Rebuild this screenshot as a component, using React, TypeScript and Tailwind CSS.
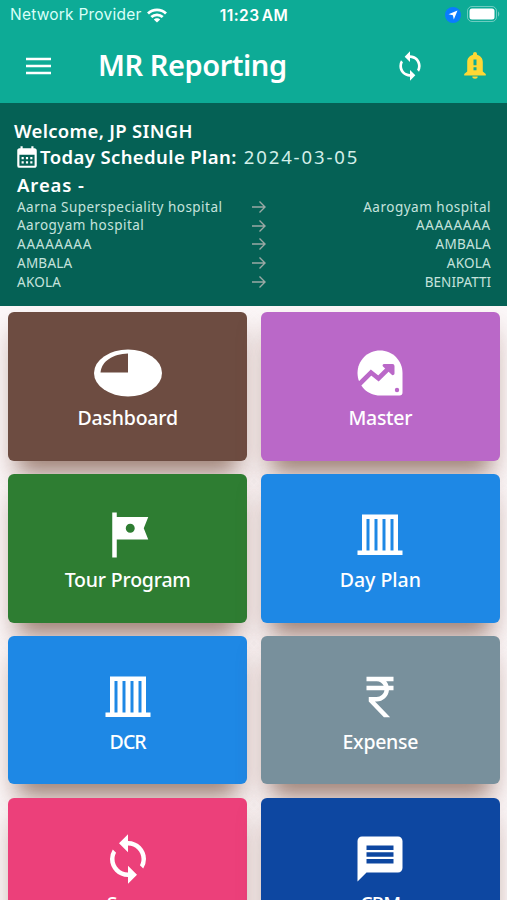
import React from 'react';
import { MdCalendarMonth, MdCurrencyRupee, MdMessage, MdSync, MdTour } from 'react-icons/md';

interface MenuItem {
  label: string;
  color: string;
  spacing: string;
  icon: React.ReactNode;
}

const areas = [
  { from: 'Aarna Superspeciality hospital', to: 'Aarogyam hospital', fromSpacing: 'tracking-[0.47px]', toSpacing: 'tracking-[0.5px]' },
  { from: 'Aarogyam hospital', to: 'AAAAAAAA', fromSpacing: 'tracking-[0.47px]', toSpacing: 'tracking-[0.75px]' },
  { from: 'AAAAAAAA', to: 'AMBALA', fromSpacing: 'tracking-[0.75px]', toSpacing: 'tracking-[0.25px]' },
  { from: 'AMBALA', to: 'AKOLA', fromSpacing: 'tracking-[0.25px]', toSpacing: 'tracking-[0.25px]' },
  { from: 'AKOLA', to: 'BENIPATTI', fromSpacing: 'tracking-[0.25px]', toSpacing: 'tracking-[0px]' },
];

const PieIcon = () => (
  <svg width="70" height="54" viewBox="0 0 70 54">
    <ellipse cx="35" cy="27" rx="34" ry="23.5" fill="white" />
    <path d="M35 26.5V7.5C20 8 8.500 15 7.500 26.500Z" fill="#6d4c41" />
  </svg>
);

const TrendIcon = () => (
  <svg width="54" height="54" viewBox="0 0 54 54" fill="none">
    <path d="M27 4.500C39.500 4.500 49.500 14.500 49.500 27V46.500a3 3 0 0 1-3 3H27C14.500 49.500 4.500 39.500 4.500 27S14.500 4.500 27 4.500Z" fill="white" />
    <path d="M5.500 39 18 26.500 25.500 32.500 36 22" stroke="#ba68c8" strokeWidth="4.600" />
    <path d="M31.500 18H39.500a2 2 0 0 1 2 2V27.500a1.700 1.700 0 0 1-3 1L30 20.500a1.500 1.500 0 0 1 1.500-2.500Z" fill="#ba68c8" />
    <circle cx="44" cy="44" r="2.200" fill="#ba68c8" />
  </svg>
);

const BuildingIcon = () => (
  <svg width="54" height="54" viewBox="0 0 54 54">
    <path
      fill="white"
      fillRule="evenodd"
      d="M9 6.500H45V42.500H49.500V47H4.500V42.500H9ZM13.500 11V42.500H16.500V11ZM21.500 11V42.500H24.500V11ZM29.500 11V42.500H32.500V11ZM37.500 11V42.500H40.500V11Z"
    />
  </svg>
);

const BellIcon = () => (
  <svg className="mr-[5px] ml-[38px]" width="22" height="27" viewBox="0 0 22 27" fill="#fdd835">
    <path
      fillRule="evenodd"
      d="M11 0a2 2 0 0 1 2 2V2.800C16.500 3.700 18.800 6.500 18.800 10V19.500L21.800 22V23.400H.2V22L3.200 19.500V10C3.200 6.500 5.500 3.700 9 2.800V2A2 2 0 0 1 11 0ZM9.500 7.500V13.200H12.500V7.500ZM9.500 15.300V18.300H12.500V15.300Z"
    />
    <path d="M8.300 24.500H13.700A2.700 2.200 0 0 1 8.300 24.500Z" />
  </svg>
);

const menu: MenuItem[] = [
  { label: 'Dashboard', color: 'bg-[#6d4c41]', spacing: 'tracking-[-0.2px]', icon: <PieIcon /> },
  { label: 'Master', color: 'bg-[#ba68c8]', spacing: 'tracking-[-0.3px]', icon: <TrendIcon /> },
  { label: 'Tour Program', color: 'bg-[#2e7d32]', spacing: 'tracking-[-0.2px]', icon: <MdTour size={54} /> },
  { label: 'Day Plan', color: 'bg-[#1e88e5]', spacing: 'tracking-[0px]', icon: <BuildingIcon /> },
  { label: 'DCR', color: 'bg-[#1e88e5]', spacing: 'tracking-[-0.9px]', icon: <BuildingIcon /> },
  { label: 'Expense', color: 'bg-[#78909c]', spacing: 'tracking-[-0.3px]', icon: <MdCurrencyRupee size={54} /> },
  { label: 'Sync', color: 'bg-[#ec407a]', spacing: 'tracking-[-0.2px]', icon: <MdSync size={54} /> },
  { label: 'CRM', color: 'bg-[#0d47a1]', spacing: 'tracking-[-0.9px]', icon: <MdMessage size={54} /> },
];

const StatusBar = () => (
  <div className="grid h-[30px] grid-cols-3 items-center px-[10px] font-['Inter',sans-serif]">
    <div className="flex items-center gap-[6px]">
      <span className="text-[15.5px] tracking-[0.22px] whitespace-nowrap text-[#d9fff8]">Network Provider</span>
      <svg className="shrink-0" width="20" height="15" viewBox="0 0 20 15" fill="none" stroke="white" strokeWidth="2.800">
        <path d="M1 5.500C6 .7 14 .7 19 5.500M4.300 9.100C7.500 6.100 12.500 6.100 15.700 9.100" />
        <path d="M10 14.500 6.800 11.500C8.500 9.800 11.500 9.800 13.200 11.500Z" fill="white" stroke="none" />
      </svg>
    </div>
    <div className="pt-[1px] pl-[1px] text-center text-[15.5px] font-semibold tracking-[0.45px] [word-spacing:-2px]">11:23 AM</div>
    <div className="flex items-center justify-end gap-[6px]">
      <svg width="16" height="16" viewBox="0 0 16 16">
        <circle cx="8" cy="8" r="8" fill="#0a7cff" />
        <path d="M12.500 3.500 8.800 12.500 7.900 8.200 3.500 7.300Z" fill="white" />
      </svg>
      <svg className="-mr-[3px] mb-[2px]" width="33" height="16" viewBox="0 0 33 16">
        <rect x=".5" y=".5" width="29" height="15" rx="4.500" fill="none" stroke="white" strokeOpacity=".4" />
        <rect x="2.500" y="2.500" width="25" height="11" rx="2.500" fill="white" />
        <path d="M31 5.500c1.700.6 1.700 4.400 0 5Z" fill="white" fillOpacity=".4" />
      </svg>
    </div>
  </div>
);

const MenuCard: React.FC<{ item: MenuItem }> = ({ item }) => (
  <button
    className={`relative flex h-[148.5px] flex-col items-center rounded-[6px] pt-[34px] shadow-[0_24px_20px_-14px_rgba(125,92,76,0.62),0_14px_26px_-2px_rgba(150,100,90,0.36)] ${item.color}`}
  >
    {item.icon}
    <span className={`mt-[4px] text-[19.5px] leading-[28px] font-medium ${item.spacing}`}>{item.label}</span>
  </button>
);

const App: React.FC = () => {
  return (
    <div className="h-[900px] w-[507px] overflow-hidden bg-[#fcf8f9] font-['Noto_Sans',sans-serif] text-white">
      {/* Status bar and app bar */}
      <header className="h-[103px] bg-[#0dab96]">
        <StatusBar />
        <div className="flex h-[71px] items-center pr-[16px] pl-[26px]">
          <svg width="25" height="18" viewBox="0 0 25 18" stroke="white" strokeWidth="2.600">
            <path d="M0 2H25M0 9H25M0 16H25" />
          </svg>
          <h1 className="-mt-[2px] ml-[47px] text-[29px] leading-[40px] font-semibold tracking-[-0.45px] whitespace-nowrap">
            MR Reporting
          </h1>
          <MdSync className="ml-auto" size={32} />
          <BellIcon />
        </div>
      </header>

      {/* Schedule for the day */}
      <section className="relative z-10 h-[202.5px] bg-[#056155] pt-[14px] pr-[16px] pl-[17px]">
        <p className="-ml-[3px] text-[18.5px] leading-[27px] font-semibold tracking-[0.3px]">Welcome, JP SINGH</p>
        <div className="-ml-[3px] flex items-center text-[18.5px] leading-[26.500px] font-semibold whitespace-nowrap">
          <MdCalendarMonth size={26} />
          <span className="tracking-[0.4px]">Today Schedule Plan:</span>
          <span className="ml-[7px] font-normal tracking-[1.900px] text-[#d3efe9]">2024-03-05</span>
        </div>
        <p className="text-[18.5px] leading-[27px] font-semibold tracking-[0.9px]">Areas -</p>
        <ul className="text-[13.5px] leading-[18.8px] text-[#c5e3dd]">
          {areas.map((area) => (
            <li key={area.from} className="flex items-center">
              <span className={`w-[235px] whitespace-nowrap ${area.fromSpacing}`}>{area.from}</span>
              <svg width="14" height="14" viewBox="0 0 14 14" fill="none" stroke="#9ba9a5" strokeWidth="1.400">
                <path d="M0 7H12.500M7.500 1.500 13 7 7.500 12.500" />
              </svg>
              <span className={`flex-1 text-right ${area.toSpacing}`}>{area.to}</span>
            </li>
          ))}
        </ul>
      </section>

      <main className="grid grid-cols-2 gap-[13.3px] pt-[6.800px] pr-[7px] pl-[8px]">
        {menu.map((item) => (
          <MenuCard key={item.label} item={item} />
        ))}
      </main>
    </div>
  );
};

export default App;
